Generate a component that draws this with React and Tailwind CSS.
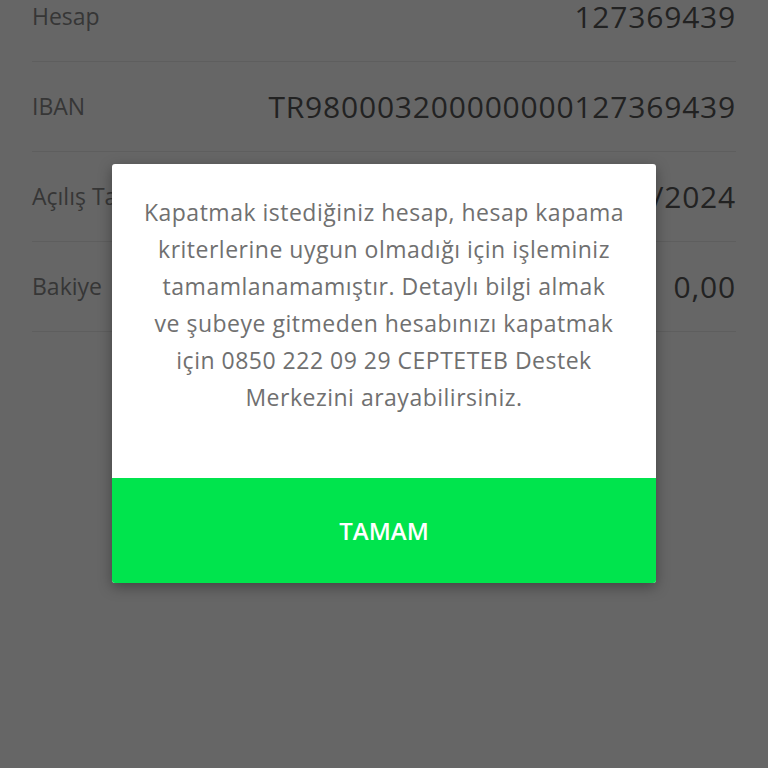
import React from 'react';

const rows = [
  { label: 'Hesap', value: '127369439' },
  { label: 'IBAN', value: 'TR980003200000000127369439' },
  { label: 'Açılış Tarihi', value: '12/03/2024' },
  { label: 'Bakiye', value: '0,00' },
];

const message = [
  'Kapatmak istediğiniz hesap, hesap kapama',
  'kriterlerine uygun olmadığı için işleminiz',
  'tamamlanamamıştır. Detaylı bilgi almak',
  've şubeye gitmeden hesabınızı kapatmak',
  'için 0850 222 09 29 CEPTETEB Destek',
  'Merkezini arayabilirsiniz.',
];

const App = () => {
  return (
    <div
      className="relative h-[768px] w-[768px] overflow-hidden bg-[#666666]"
      style={{ fontFamily: '"Open Sans", "Liberation Sans", sans-serif' }}
    >
      <div className="-mt-[28px] px-[32px]">
        {rows.map((row) => (
          <div
            key={row.label}
            className="flex h-[90px] items-center justify-between border-b border-[#5e5e5e]"
          >
            <span className="text-[23px] text-[#363636]">{row.label}</span>
            <span className="text-[30px] tracking-[0.8px] text-[#222222]">{row.value}</span>
          </div>
        ))}
      </div>

      <div className="absolute left-[112px] top-[164px] w-[544px] overflow-hidden rounded-[3px] bg-white shadow-[0_4px_14px_rgba(0,0,0,0.35)]">
        <div className="pb-[62px] pt-[30px] text-center text-[23px] leading-[37px] tracking-[0.5px] text-[#707070]">
          {message.map((line) => (
            <div key={line} className="whitespace-nowrap">
              {line}
            </div>
          ))}
        </div>
        <button
          type="button"
          className="flex h-[105px] w-full items-center justify-center bg-[#00e44d] text-[24px] font-semibold text-white"
        >
          TAMAM
        </button>
      </div>
    </div>
  );
};

export default App;
